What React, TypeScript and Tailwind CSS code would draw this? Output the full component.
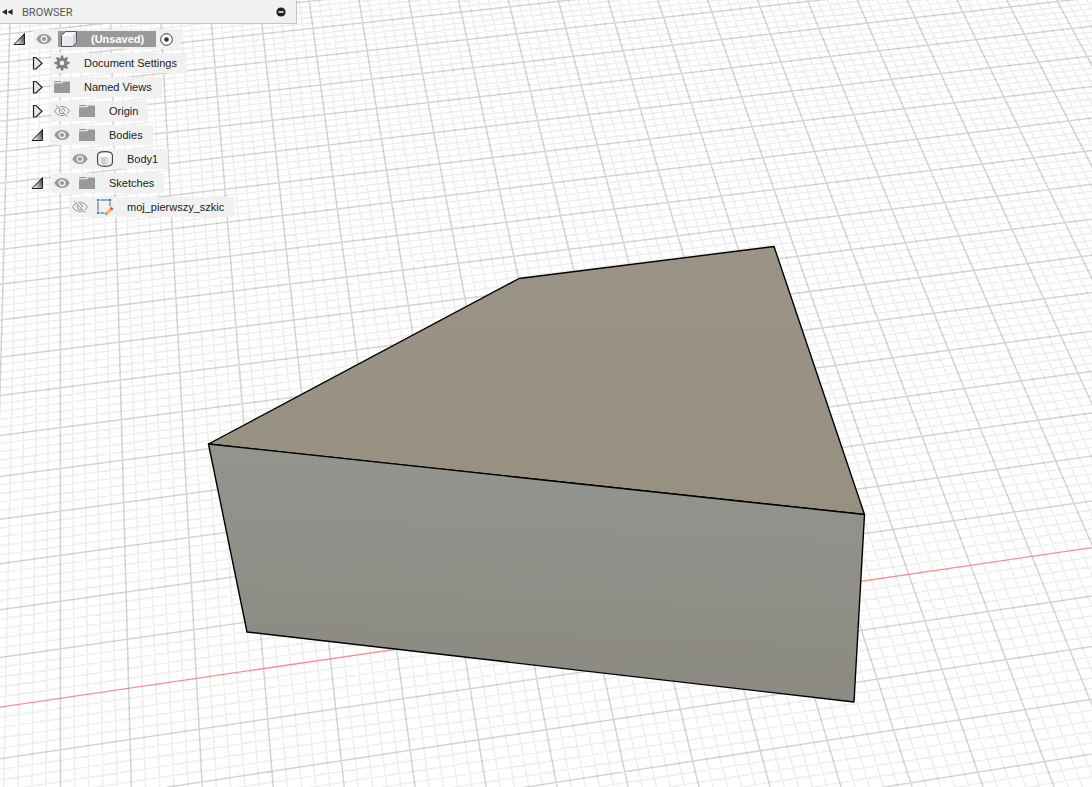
import React from 'react';

type Point = [number, number];

interface TreeNode {
  label: string;
  indent: string;
  expanded?: boolean;
  visible?: boolean;
  icon: React.ReactNode;
}

// Screen corners of a 15 x 12 cell patch of the ground plane
const CORNERS: Point[] = [[60.4, 698.3], [1032, 556.3], [853.7, 114.7], [60.3, 208.7]];
const COLS = 15;
const ROWS = 12;

function createProjection([p0, p1, p2, p3]: Point[]) {
  const sx = p0[0] - p1[0] + p2[0] - p3[0];
  const sy = p0[1] - p1[1] + p2[1] - p3[1];
  const dx1 = p1[0] - p2[0];
  const dx2 = p3[0] - p2[0];
  const dy1 = p1[1] - p2[1];
  const dy2 = p3[1] - p2[1];
  const det = dx1 * dy2 - dx2 * dy1;
  const g = (sx * dy2 - dx2 * sy) / det;
  const h = (dx1 * sy - sx * dy1) / det;

  return (col: number, row: number) => {
    const u = col / COLS;
    const v = row / ROWS;
    const w = 1 + g * u + h * v;
    const x = (p0[0] + (p1[0] - p0[0] + g * p1[0]) * u + (p3[0] - p0[0] + h * p3[0]) * v) / w;
    const y = (p0[1] + (p1[1] - p0[1] + g * p1[1]) * u + (p3[1] - p0[1] + h * p3[1]) * v) / w;
    return `${x.toFixed(2)} ${y.toFixed(2)}`;
  };
}

const project = createProjection(CORNERS);

const COL_RANGE = [-4, 26];
const ROW_RANGE = [-8, 22];

function buildGrid() {
  let major = '';
  let minor = '';
  // five minor cells per major cell
  for (let n = COL_RANGE[0] * 5; n <= COL_RANGE[1] * 5; n++) {
    const line = `M${project(n / 5, ROW_RANGE[0])}L${project(n / 5, ROW_RANGE[1])}`;
    if (n % 5 === 0) major += line;
    else minor += line;
  }
  for (let n = ROW_RANGE[0] * 5; n <= ROW_RANGE[1] * 5; n++) {
    if (n === 0) continue; // the X axis is drawn separately
    const line = `M${project(COL_RANGE[0], n / 5)}L${project(COL_RANGE[1], n / 5)}`;
    if (n % 5 === 0) major += line;
    else minor += line;
  }
  const axis = `M${project(COL_RANGE[0], 0)}L${project(COL_RANGE[1], 0)}`;
  return { major, minor, axis };
}

const GRID = buildGrid();

function Viewport() {
  return (
    <svg
      className="col-start-1 row-start-1 h-screen w-full"
      viewBox="0 0 1092 787"
      preserveAspectRatio="xMinYMin slice"
      role="img"
      aria-label="Model viewport"
    >
      <defs>
        <linearGradient id="topFace" x1="0" y1="0" x2="0" y2="1">
          <stop offset="0" stopColor="#9b9486" />
          <stop offset="1" stopColor="#979081" />
        </linearGradient>
        <linearGradient id="frontFace" x1="0.55" y1="0" x2="0.45" y2="1">
          <stop offset="0.1" stopColor="#93948e" />
          <stop offset="1" stopColor="#8b8981" />
        </linearGradient>
      </defs>
      <rect width="1092" height="787" fill="#fff" />
      <path d={GRID.minor} stroke="#000" strokeOpacity="0.065" strokeWidth="1.5" fill="none" />
      <path d={GRID.major} stroke="#000" strokeOpacity="0.17" strokeWidth="1.5" fill="none" />
      <path d={GRID.axis} stroke="#ff8c8c" strokeWidth="1.3" fill="none" />
      <g stroke="#000" strokeWidth="1.4" strokeLinejoin="round">
        <path d="M208.5 444 519 278.5 774 246.5 864.5 514.5Z" fill="url(#topFace)" />
        <path d="M208.5 444 864.5 514.5 854 702 247 632Z" fill="url(#frontFace)" />
      </g>
    </svg>
  );
}

function EyeIcon() {
  return (
    <svg className="h-4 w-4" viewBox="0 0 16 16" fill="none">
      <path d="M0.3 8C2 4.7 4.800 3 8 3s6 1.700 7.700 5C14 11.300 11.200 13 8 13S2 11.300 0.300 8Z" fill="#999" />
      <circle cx="8" cy="8" r="2.8" stroke="#f1f1f1" strokeWidth="1.4" />
    </svg>
  );
}

function EyeOffIcon() {
  return (
    <svg className="h-4 w-4" viewBox="0 0 16 16" fill="none" stroke="#999">
      <path d="M0.6 8C2.3 5 4.9 3.5 8 3.500s5.700 1.500 7.400 4.500C13.700 11 11.100 12.500 8 12.500S2.300 11 0.600 8Z" />
      <circle cx="8" cy="8" r="2.7" />
      <path d="M3.2 1.8 14.2 13.2" stroke="#f1f1f1" strokeWidth="1.5" />
      <path d="M2.2 2.3 13.5 13.9" />
    </svg>
  );
}

function FolderIcon() {
  return (
    <svg className="h-4 w-4" viewBox="0 0 16 16" fill="#999">
      <path d="M0 2h7.500v1.200H0Z" />
      <path d="M0 4.300h8L9.700 2.500H16V14H0Z" />
    </svg>
  );
}

function GearIcon() {
  return (
    <svg className="h-4 w-4" viewBox="0 0 16 16" fill="none" stroke="#808080">
      <circle cx="8" cy="8" r="3.9" strokeWidth="3.2" />
      <g strokeWidth="2.6">
        <path d="M8 0.500V3M8 13v2.500M0.500 8H3M13 8h2.500" />
        <path d="M2.700 2.700 4.400 4.400M11.600 11.600l1.700 1.700M2.700 13.300l1.700-1.700M11.600 4.400l1.700-1.700" />
      </g>
    </svg>
  );
}

function ComponentIcon() {
  return (
    <svg className="h-4 w-4" viewBox="0 0 16 16" strokeLinejoin="round">
      <path d="M0.600 4.500 4.500 0.600H15.400V11.500L11.500 15.400H0.600Z" fill="#fff" stroke="#4a4a55" />
      <path d="M1.200 5H11.200V14.800H1.200Z" fill="#e9eaf0" />
      <path d="M11.600 4.800 14.800 1.500V11.300L11.600 14.500Z" fill="#cfd0d8" />
    </svg>
  );
}

function BodyIcon() {
  return (
    <svg className="h-4 w-4" viewBox="0 0 16 16">
      <defs>
        <linearGradient id="bodySide">
          <stop offset="0" stopColor="#e9eaed" />
          <stop offset="0.4" stopColor="#c6c8ce" />
          <stop offset="1" stopColor="#f6f6f8" />
        </linearGradient>
      </defs>
      <path
        d="M0.600 4.500C0.600 1.800 3 0.700 8 0.700S15.400 1.800 15.400 4.500v7c0 2.700-2.400 3.800-7.400 3.800S0.600 14.200 0.600 11.500Z"
        fill="#fff"
        stroke="#3f4454"
        strokeWidth="1.2"
      />
      <path d="M2.500 5.500C5 6.200 11 6.200 13.500 5.500v7.500C11 14 5 14 2.500 13Z" fill="url(#bodySide)" />
    </svg>
  );
}

function SketchIcon() {
  return (
    <svg className="h-4 w-4" viewBox="0 0 16 16">
      <path d="M3 1h9M1 3v9M13 3v4.500M3 14h4.500" stroke="#5f5f5f" fill="none" />
      <path d="M0 0h2.200v2.200H0ZM12 0h2.200v2.200H12ZM0 12.800h2.200V15H0Z" fill="#1c8be0" />
      <path d="M8.800 13.200 12.800 9.300 15 11.400 11 15.300Z" fill="#fbb843" />
      <path d="M12.800 9.300 13.800 8.300Q14.500 7.800 15.300 8.500T16 10.400L15 11.400Z" fill="#ee3e3e" />
      <path d="M8.800 13.200 11 15.300 8 16Z" fill="#777" />
    </svg>
  );
}

function Arrow({ expanded }: { expanded: boolean }) {
  return (
    <svg className="h-4 w-4" viewBox="0 0 16 16">
      <defs>
        <linearGradient id="arrowFill" x1="0" y1="1" x2="1" y2="0.5">
          <stop offset="0.2" stopColor="#eee" />
          <stop offset="1" stopColor="#555" />
        </linearGradient>
      </defs>
      {expanded ? (
        <path d="M3 13.500H13.500V2.500Z" fill="url(#arrowFill)" stroke="#222" />
      ) : (
        <path d="M4.500 2.500H7L13 8.200 7 14H4.500Z" fill="#e6e6ea" stroke="#222" strokeWidth="1.2" />
      )}
    </svg>
  );
}

const NODES: TreeNode[] = [
  { label: 'Document Settings', indent: 'pl-[29px]', expanded: false, icon: <GearIcon /> },
  { label: 'Named Views', indent: 'pl-[29px]', expanded: false, icon: <FolderIcon /> },
  { label: 'Origin', indent: 'pl-[29px]', expanded: false, visible: false, icon: <FolderIcon /> },
  { label: 'Bodies', indent: 'pl-[29px]', expanded: true, visible: true, icon: <FolderIcon /> },
  { label: 'Body1', indent: 'pl-[69px]', visible: true, icon: <BodyIcon /> },
  { label: 'Sketches', indent: 'pl-[29px]', expanded: true, visible: true, icon: <FolderIcon /> },
  { label: 'moj_pierwszy_szkic', indent: 'pl-[69px]', visible: false, icon: <SketchIcon /> },
];

function TreeRow({ node }: { node: TreeNode }) {
  return (
    <li className={`flex h-6 items-center ${node.indent}`}>
      {node.expanded !== undefined && (
        <button aria-label={`Toggle ${node.label}`} aria-expanded={node.expanded} className="mr-[6px]">
          <Arrow expanded={node.expanded} />
        </button>
      )}
      <div className="flex h-5 items-center bg-[#f1f1f1] pr-[10px] pl-[3px]">
        {node.visible !== undefined && (
          <button aria-label={`Show ${node.label}`} aria-pressed={node.visible} className="mr-[9px]">
            {node.visible ? <EyeIcon /> : <EyeOffIcon />}
          </button>
        )}
        {node.icon}
        <span className="ml-[14px]">{node.label}</span>
      </div>
    </li>
  );
}

function BrowserPanel() {
  return (
    <aside className="z-10 col-start-1 row-start-1 w-[297px] self-start">
      <header className="flex h-6 items-center border-r border-b border-[#c4c4c4] bg-[#f1f1f1] pr-[10px] pl-[2px]">
        <button aria-label="Collapse panel">
          <svg className="h-2 w-[11px]" viewBox="0 0 11 8" fill="#222">
            <path d="M5 1v6L0 4ZM10.500 1v6L5.500 4Z" />
          </svg>
        </button>
        <h1 className="ml-[9px] pt-[2px] font-['Roboto',sans-serif] text-[11px] leading-4 text-[#555]">BROWSER</h1>
        <button aria-label="Minimize" className="ml-auto">
          <svg className="h-[10px] w-[10px]" viewBox="0 0 10 10">
            <circle cx="5" cy="5" r="4.6" fill="#222" />
            <path d="M2.500 5h5" stroke="#fff" strokeWidth="1.5" />
          </svg>
        </button>
      </header>

      <ul className="pt-[3px] text-[11px] whitespace-nowrap text-[#222]">
        <li className="flex h-6 items-center pl-[11px]">
          <button aria-label="Toggle document" aria-expanded className="mr-[6px]">
            <Arrow expanded />
          </button>
          <div className="flex h-5 items-center bg-[#f1f1f1] pr-[8px] pl-[3px]">
            <button aria-label="Show document" aria-pressed className="mr-[6px]">
              <EyeIcon />
            </button>
            <div className="flex h-4 items-center bg-[#999] pr-[12px] pl-[3px]">
              <ComponentIcon />
              <span className="ml-[14px] font-bold text-white">(Unsaved)</span>
            </div>
            <label className="ml-[4px] flex">
              <input type="radio" name="active" defaultChecked aria-label="Activate component" className="peer sr-only" />
              <svg className="h-[13px] w-[13px]" viewBox="0 0 13 13">
                <circle cx="6.5" cy="6.5" r="5.8" fill="#fff" stroke="#333" />
                <circle cx="6.5" cy="6.5" r="2.3" fill="#333" />
              </svg>
            </label>
          </div>
        </li>
        {NODES.map((node) => (
          <TreeRow key={node.label} node={node} />
        ))}
      </ul>
    </aside>
  );
}

export default function App() {
  return (
    <main className="grid min-h-screen grid-cols-1 overflow-hidden bg-white font-['Liberation_Sans',Arial,sans-serif]">
      <Viewport />
      <BrowserPanel />
    </main>
  );
}
